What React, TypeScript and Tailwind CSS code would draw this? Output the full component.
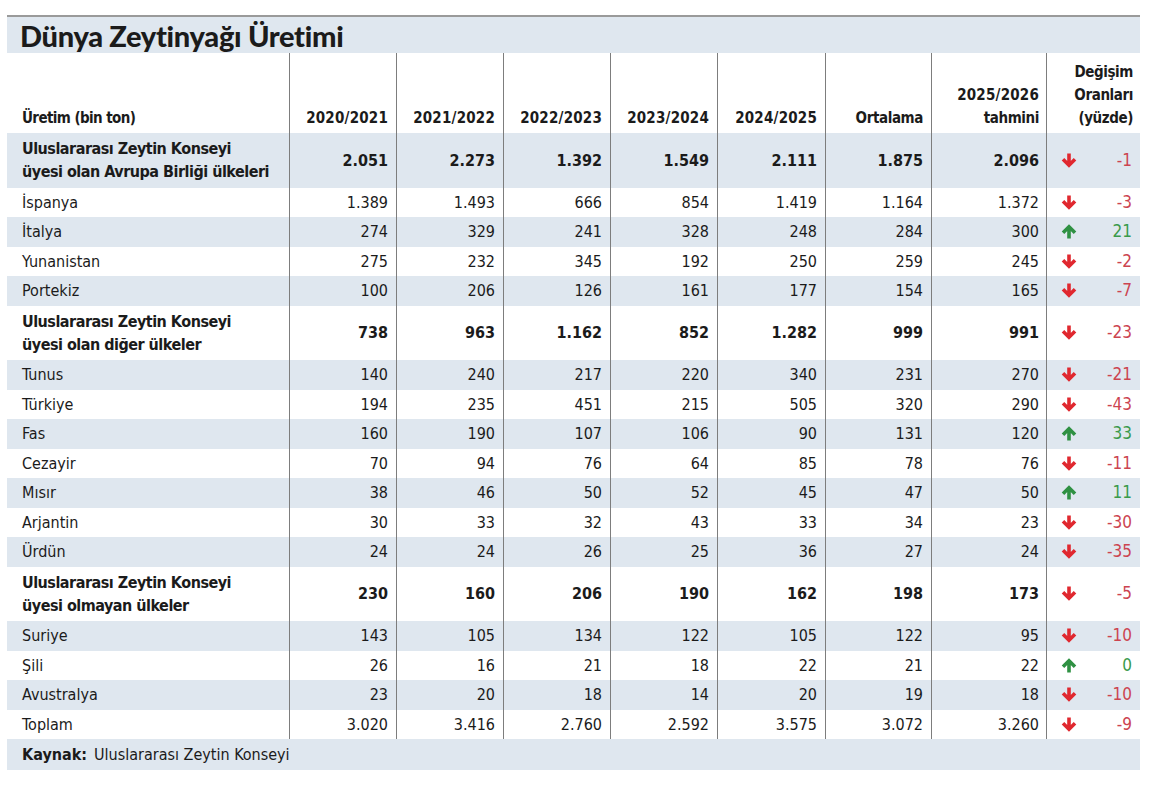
const cols = "grid grid-cols-[283px_107px_107px_107px_107px_108px_106px_115px_93px]";

type Row = {
  label: string[];
  values: string[];
  change: number;
  group?: boolean;
};

const rows: Row[] = [
  {
    label: ["Uluslararası Zeytin Konseyi", "üyesi olan Avrupa Birliği ülkeleri"],
    values: ["2.051", "2.273", "1.392", "1.549", "2.111", "1.875", "2.096"],
    change: -1,
    group: true,
  },
  { label: ["İspanya"], values: ["1.389", "1.493", "666", "854", "1.419", "1.164", "1.372"], change: -3 },
  { label: ["İtalya"], values: ["274", "329", "241", "328", "248", "284", "300"], change: 21 },
  { label: ["Yunanistan"], values: ["275", "232", "345", "192", "250", "259", "245"], change: -2 },
  { label: ["Portekiz"], values: ["100", "206", "126", "161", "177", "154", "165"], change: -7 },
  {
    label: ["Uluslararası Zeytin Konseyi", "üyesi olan diğer ülkeler"],
    values: ["738", "963", "1.162", "852", "1.282", "999", "991"],
    change: -23,
    group: true,
  },
  { label: ["Tunus"], values: ["140", "240", "217", "220", "340", "231", "270"], change: -21 },
  { label: ["Türkiye"], values: ["194", "235", "451", "215", "505", "320", "290"], change: -43 },
  { label: ["Fas"], values: ["160", "190", "107", "106", "90", "131", "120"], change: 33 },
  { label: ["Cezayir"], values: ["70", "94", "76", "64", "85", "78", "76"], change: -11 },
  { label: ["Mısır"], values: ["38", "46", "50", "52", "45", "47", "50"], change: 11 },
  { label: ["Arjantin"], values: ["30", "33", "32", "43", "33", "34", "23"], change: -30 },
  { label: ["Ürdün"], values: ["24", "24", "26", "25", "36", "27", "24"], change: -35 },
  {
    label: ["Uluslararası Zeytin Konseyi", "üyesi olmayan ülkeler"],
    values: ["230", "160", "206", "190", "162", "198", "173"],
    change: -5,
    group: true,
  },
  { label: ["Suriye"], values: ["143", "105", "134", "122", "105", "122", "95"], change: -10 },
  { label: ["Şili"], values: ["26", "16", "21", "18", "22", "21", "22"], change: 0 },
  { label: ["Avustralya"], values: ["23", "20", "18", "14", "20", "19", "18"], change: -10 },
  { label: ["Toplam"], values: ["3.020", "3.416", "2.760", "2.592", "3.575", "3.072", "3.260"], change: -9 },
];

const Arrow = ({ up }: { up: boolean }) => (
  <svg width="16" height="15" viewBox="0 0 16 15" className={up ? "rotate-180" : ""}>
    <path
      d="M8 0.5 V12 M2 6.2 L8 12.2 L14 6.2"
      fill="none"
      stroke={up ? "#2f9143" : "#e0282f"}
      strokeWidth="3.6"
      strokeLinecap="butt"
      strokeLinejoin="miter"
    />
  </svg>
);

const App = () => {
  return (
    <div
      className="w-[1156px] h-[797px] bg-white pt-[15px] pl-[7px] text-[#1b1b1b]"
      style={{ fontFamily: '"DejaVu Sans Condensed", "DejaVu Sans", sans-serif', fontStretch: "condensed" }}
    >
      <div className="w-[1133px]">
        {/* Title */}
        <div className="border-t-2 border-[#9a9a9a] bg-[#dfe7ef] h-[38px] flex items-center pl-[13px]">
          <h1 className="text-[29px] font-black tracking-[-0.3px] font-['Lato',sans-serif] leading-none" style={{ fontStretch: "normal" }}>
            Dünya Zeytinyağı Üretimi
          </h1>
        </div>

        {/* Header */}
        <div className={`${cols} h-[80px] text-[15px] font-bold leading-[23px]`}>
          <div className="border-r-[1.5px] border-[#7d7d7d] flex items-end pl-[15px] pb-[3px] tracking-[-0.6px]">Üretim (bin ton)</div>
          {["2020/2021", "2021/2022", "2022/2023", "2023/2024", "2024/2025"].map((h) => (
            <div key={h} className="border-r-[1.5px] border-[#7d7d7d] flex items-end justify-end pr-[8px] pb-[3px] tracking-[0.2px]">
              {h}
            </div>
          ))}
          <div className="border-r-[1.5px] border-[#7d7d7d] flex items-end justify-end pr-[8px] pb-[3px] tracking-[-0.4px]">
            Ortalama
          </div>
          <div className="border-r-[1.5px] border-[#7d7d7d] flex flex-col items-end justify-end pr-[7px] pb-[3px]">
            <span className="tracking-[0.2px]">2025/2026</span>
            <span className="tracking-[-0.4px]">tahmini</span>
          </div>
          <div className="flex flex-col items-end justify-end pr-[7px] pb-[3px] tracking-[-0.4px]">
            <span>Değişim</span>
            <span>Oranları</span>
            <span>(yüzde)</span>
          </div>
        </div>

        {/* Body */}
        {rows.map((r, i) => (
          <div
            key={i}
            className={`${cols} ${r.group ? "h-[54.5px] font-bold" : "h-[29.5px]"} ${i % 2 === 0 ? "bg-[#dfe7ef]" : "bg-white"} text-[16px] leading-[23px]`}
          >
            <div className={`border-r-[1.5px] border-[#7d7d7d] flex flex-col justify-center pl-[15px] ${r.group ? "tracking-[-0.5px]" : ""}`}>
              {r.label.map((l) => (
                <span key={l}>{l}</span>
              ))}
            </div>
            {r.values.map((v, j) => (
              <div key={j} className={`border-r-[1.5px] border-[#7d7d7d] flex items-center justify-end ${j === 6 ? "pr-[7px]" : "pr-[8px]"}`}>
                {v}
              </div>
            ))}
            <div className="flex items-center pl-[14px] pr-[8px] font-normal">
              <Arrow up={r.change >= 0} />
              <span className={`ml-auto text-[17px] ${r.change >= 0 ? "text-[#3a9a4b]" : "text-[#cc4450]"}`}>{r.change}</span>
            </div>
          </div>
        ))}

        {/* Source */}
        <div className="bg-[#dfe7ef] h-[31px] flex items-center pl-[15px] text-[16px]">
          <span className="font-bold mr-[7px]">Kaynak:</span>
          <span>Uluslararası Zeytin Konseyi</span>
        </div>
      </div>
    </div>
  );
};

export default App;
